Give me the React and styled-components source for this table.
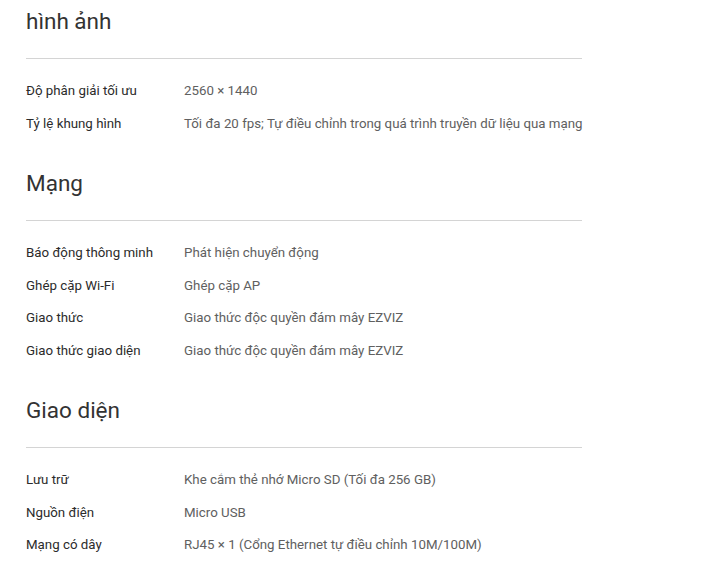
import React from "react";
import styled, { createGlobalStyle } from "styled-components";

const GlobalStyle = createGlobalStyle`
  body {
    margin: 0;
    background: #fff;
    font-family: Roboto, "Noto Sans", sans-serif;
  }
`;

const Page = styled.div`
  width: 556px;
  padding-left: 26px;
`;

const Section = styled.section`
  & + & {
    margin-top: 21.8px;
  }
`;

const Heading = styled.h2`
  margin: 0;
  font-size: 22.5px;
  font-weight: 400;
  line-height: 41px;
  color: #333;
  padding: 1px 0 16px;
  border-bottom: 1px solid #d4d4d4;
`;

const List = styled.div`
  padding-top: 16px;
`;

const Row = styled.div`
  display: grid;
  grid-template-columns: 158px 1fr;
  height: 32.6px;
  line-height: 32.6px;
  font-size: 13.3px;
  white-space: nowrap;
`;

const Label = styled.span`
  color: #2b2b2b;
`;

const Value = styled.span`
  color: #606060;
`;

const specs = [
  {
    title: "hình ảnh",
    rows: [
      ["Độ phân giải tối ưu", "2560 × 1440"],
      ["Tỷ lệ khung hình", "Tối đa 20 fps; Tự điều chỉnh trong quá trình truyền dữ liệu qua mạng"],
    ],
  },
  {
    title: "Mạng",
    rows: [
      ["Báo động thông minh", "Phát hiện chuyển động"],
      ["Ghép cặp Wi-Fi", "Ghép cặp AP"],
      ["Giao thức", "Giao thức độc quyền đám mây EZVIZ"],
      ["Giao thức giao diện", "Giao thức độc quyền đám mây EZVIZ"],
    ],
  },
  {
    title: "Giao diện",
    rows: [
      ["Lưu trữ", "Khe cắm thẻ nhớ Micro SD (Tối đa 256 GB)"],
      ["Nguồn điện", "Micro USB"],
      ["Mạng có dây", "RJ45 × 1 (Cổng Ethernet tự điều chỉnh 10M/100M)"],
    ],
  },
];

const App = () => (
  <>
    <GlobalStyle />
    <Page>
      {specs.map((section, key) => (
        <Section key={key}>
          <Heading>{section.title}</Heading>
          <List>
            {section.rows.map(([label, value], i) => (
              <Row key={i}>
                <Label>{label}</Label>
                <Value>{value}</Value>
              </Row>
            ))}
          </List>
        </Section>
      ))}
    </Page>
  </>
);

export default App;
